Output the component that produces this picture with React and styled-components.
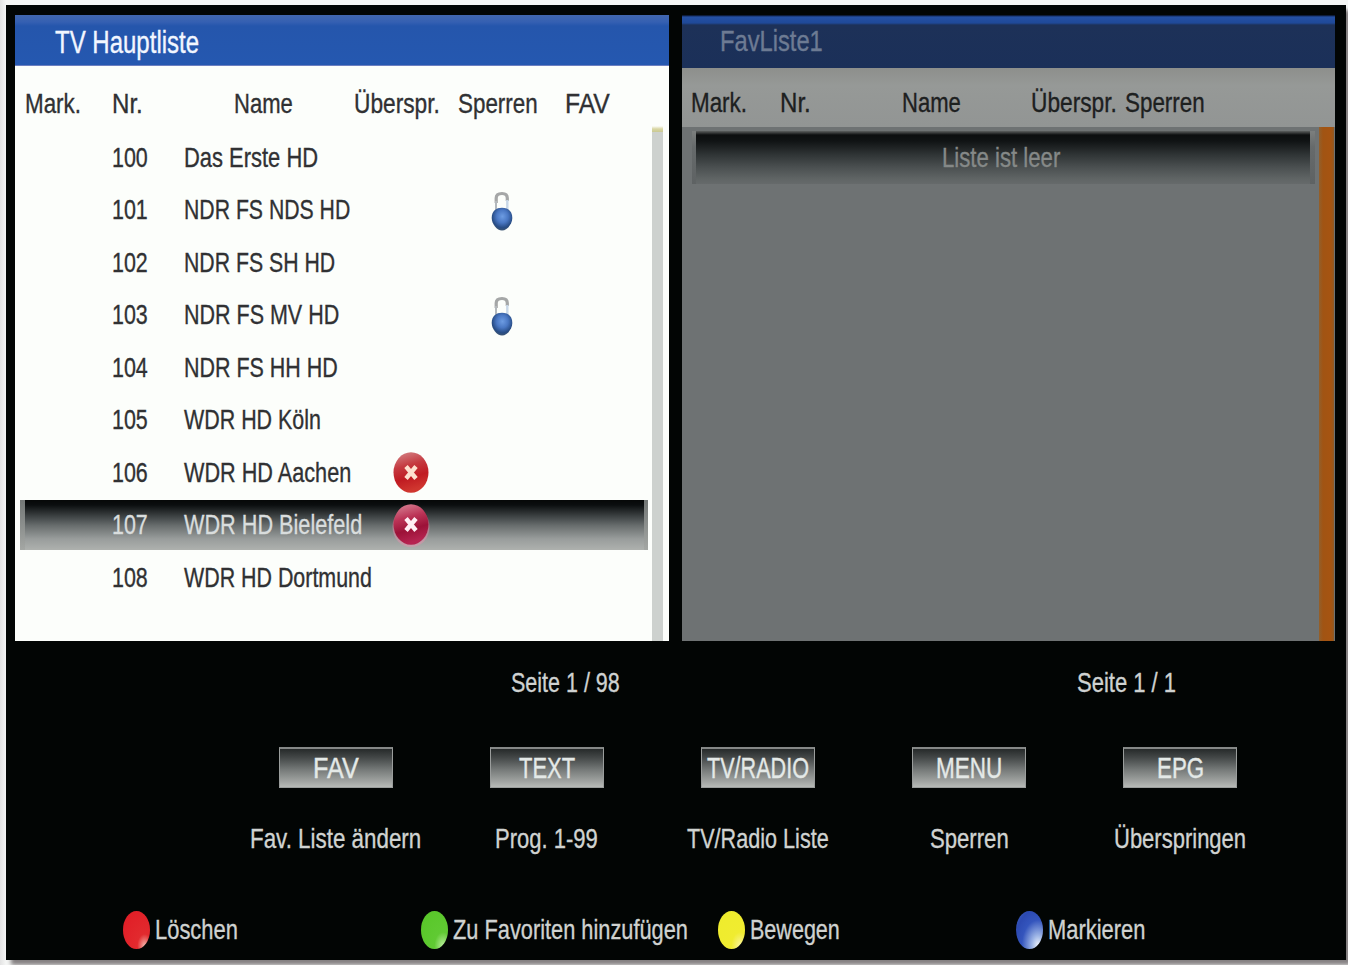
import React, { useLayoutEffect, useRef, useState } from "react";
import styled, { createGlobalStyle } from "styled-components";

const GlobalStyle = createGlobalStyle`
  *, *::before, *::after { box-sizing: border-box; }
  body {
    margin: 0;
    background: #f5f6f5;
    font-family: "Liberation Sans", Arial, sans-serif;
    overflow: hidden;
  }
`;

const Page = styled.div`
  width: 1348px;
  height: 965px;
  padding: 5px 2px 5px 6px;
  overflow: hidden;
  background: linear-gradient(90deg, #e3e3e3 0, #f5f6f5 6px);
`;

const Screen = styled.main`
  width: 1340px;
  height: 955px;
  padding: 10px 11px 0 9px;
  background: #020504;
  box-shadow: 5px 5px 4px #858182;
  display: flex;
  flex-direction: column;
`;

const Panels = styled.div`
  display: grid;
  grid-template-columns: 654px 653px;
  column-gap: 13px;
  height: 626px;
`;

const Panel = styled.section`
  display: flex;
  flex-direction: column;
  background: ${(p) => (p.$dim ? "#6e7273" : "#fcfefb")};
`;

const PanelTitle = styled.header`
  display: flex;
  align-items: center;
  height: ${(p) => (p.$dim ? 53 : 51)}px;
  padding: ${(p) => (p.$dim ? "0 0 1px 38px" : "5px 0 0 40px")};
  font-size: ${(p) => (p.$dim ? 29 : 31)}px;
  color: ${(p) => (p.$dim ? "#6d7b93" : "#f2f6ff")};
  background: ${(p) =>
    p.$dim
      ? "linear-gradient(#050b18 0, #2450a4 2px, #1f4998 8px, #1d3158 10px, #1b3059 100%)"
      : "linear-gradient(#4166ae 0, #3560b2 7px, #2556ac 11px, #2558b0 100%)"};
  border-bottom: ${(p) => (p.$dim ? "none" : "1px solid #6c7fc0")};
`;

const HeaderRow = styled.div`
  display: grid;
  grid-template-columns: ${(p) => p.$columns};
  align-items: center;
  height: ${(p) => (p.$dim ? 59 : 60)}px;
  padding: ${(p) => (p.$dim ? "11px 0 0 9px" : "15px 0 0 10px")};
  font-size: 28px;
  color: ${(p) => (p.$dim ? "#1d201f" : "#303133")};
  background: ${(p) => (p.$dim ? "linear-gradient(#8d8f8c, #969997 30%, #929594)" : "none")};
`;

const PanelBody = styled.div`
  display: flex;
  flex: 1;
  min-height: 0;
`;

const List = styled.div`
  flex: 1;
  display: flex;
  flex-direction: column;
  padding: ${(p) => p.$pad};
`;

const Row = styled.div`
  height: 52.5px;
  display: flex;
  align-items: center;
`;

const RowBar = styled.div`
  width: 628px;
  height: 50px;
  padding-left: 87px;
  display: grid;
  grid-template-columns: 72px 207px 91px 60px;
  align-items: center;
  font-size: 28px;
  color: ${(p) => (p.$selected ? "#d9dddd" : "#303133")};
  background: ${(p) =>
    p.$selected
      ? "linear-gradient(#060808 0, #0b0e0f 5px, #3c4142 16px, #6a6f6f 26px, #999d9c 39px, #aeb1ae 100%)"
      : "none"};
  border: solid transparent;
  border-width: 0 4px 0 5px;
  border-image: ${(p) =>
    p.$selected ? "linear-gradient(#737776, #a4a7a4) 0 4 0 5" : "none"};
`;

const IconCell = styled.span`
  grid-column: ${(p) => p.$col};
  display: flex;
  align-items: center;
  justify-content: center;
  width: 40px;
  height: 46px;
`;

const EmptyBar = styled.div`
  width: 623px;
  height: 53px;
  padding-right: 5px;
  display: flex;
  justify-content: center;
  align-items: center;
  font-size: 28px;
  color: #858988;
  background: linear-gradient(#5d605f 0, #0c0e0f 4px, #101314 10px, #303536 24px, #4a4f50 36px, #606565 48px, #666a6b 100%);
  border: solid transparent;
  border-width: 0 5px 0 4px;
  border-image: linear-gradient(#7c7f7e, #666a6b 30%, #5e6263) 0 5 0 4;
`;

const ScrollTrack = styled.div`
  width: ${(p) => (p.$dim ? 15 : 11)}px;
  margin: ${(p) => (p.$dim ? "0 1px 0 0" : "0 6px 0 0")};
  display: flex;
  flex-direction: column;
  background: ${(p) =>
    p.$dim
      ? "linear-gradient(90deg, #92602c 0, #a15413 4px, #a65411 12px, #8f5a24 15px)"
      : "#cdd1ce"};
`;

const ScrollCap = styled.span`
  height: 6px;
  background: linear-gradient(#fcfefb, #d9d6a2 50%, #c9c993);
`;

const PageCounts = styled.div`
  display: grid;
  grid-template-columns: 566px 1fr;
  height: 84px;
  padding-left: 496px;
  align-items: center;
  font-size: 28px;
  color: #cfd2d1;
`;

const Actions = styled.div`
  display: grid;
  grid-template-columns: repeat(5, 211.2px);
  padding: 22px 0 0 215px;
`;

const Action = styled.div`
  display: flex;
  flex-direction: column;
  align-items: center;
  gap: 33px;
  font-size: 28px;
  color: #d0d3d1;
`;

const KeyButton = styled.button`
  width: 114px;
  height: 41px;
  padding: 0;
  display: flex;
  align-items: center;
  justify-content: center;
  font: inherit;
  font-size: 29px;
  color: #e4e9e7;
  border: 1px solid #9a9d9c;
  border-top: 2px solid #858887;
  background: linear-gradient(#262a2a 0, #454949 9px, #777b7a 21px, #a3a6a4 33px, #b7bab7 100%);
`;

const ColorKeys = styled.footer`
  display: grid;
  grid-template-columns: repeat(4, 297.7px);
  padding: 53px 0 0 108px;
`;

const ColorKey = styled.div`
  display: flex;
  align-items: center;
  gap: 5px;
  height: 40px;
  font-size: 28px;
  color: #cfd2d0;
`;

const Dot = styled.span`
  width: 27px;
  height: 38px;
  border-radius: 50%;
  background: ${(p) => p.$fill};
`;

const TextBox = styled.span`
  display: block;
  width: ${(p) => p.$width}px;
  line-height: 36px;
  height: 36px;
  white-space: nowrap;
`;

const Glyphs = styled.span`
  display: inline-block;
  transform-origin: 0 50%;
  -webkit-text-stroke: 0.35px currentColor;
`;

/* Condenses a line of text so that it fills the given width. */
function Condensed({ width, children }) {
  const ref = useRef(null);
  const [scale, setScale] = useState(1);
  useLayoutEffect(() => {
    setScale(width / ref.current.offsetWidth);
  }, [width, children]);
  return (
    <TextBox $width={width}>
      <Glyphs ref={ref} style={{ transform: `scaleX(${scale})` }}>
        {children}
      </Glyphs>
    </TextBox>
  );
}

function SkipIcon({ selected }) {
  const id = selected ? "skipSelected" : "skip";
  return (
    <svg width="38" height="44" viewBox="0 0 38 44">
      <defs>
        <linearGradient id={id} x1="0" y1="0" x2="0.25" y2="1">
          <stop offset="0" stopColor={selected ? "#d98a9a" : "#d58a8c"} />
          <stop offset="0.4" stopColor={selected ? "#bc3457" : "#c53a40"} />
          <stop offset="0.7" stopColor={selected ? "#9c1238" : "#c01b22"} />
          <stop offset="1" stopColor={selected ? "#b52350" : "#d0362f"} />
        </linearGradient>
      </defs>
      {selected && <ellipse cx="19" cy="24" rx="18.5" ry="20" fill="#ee8fae" opacity="0.45" />}
      <ellipse cx="19" cy="21.5" rx="17.5" ry="20.3" fill={`url(#${id})`} />
      <path
        d="M14 15.5 L24 27.5 M24 15.5 L14 27.5"
        stroke={selected ? "#ffeef4" : "#fde0cf"}
        strokeWidth="4.4"
        fill="none"
      />
    </svg>
  );
}

function LockIcon() {
  return (
    <svg width="24" height="42" viewBox="0 0 24 42">
      <defs>
        <radialGradient id="lockBody" cx="0.52" cy="0.38" r="0.62">
          <stop offset="0" stopColor="#6d9ce2" />
          <stop offset="0.45" stopColor="#4a78c4" />
          <stop offset="0.8" stopColor="#284d86" />
          <stop offset="1" stopColor="#3b5472" />
        </radialGradient>
      </defs>
      <path d="M6.2 14 V9 Q6.2 4.5 12 4.5 Q17.3 4.5 17.3 9 V12" stroke="#a5a7a7" strokeWidth="3.2" fill="none" />
      <path d="M17.3 11 V21" stroke="#c9d8e8" strokeWidth="2.4" fill="none" />
      <path d="M6 12 V21" stroke="#b3b8bc" strokeWidth="2" fill="none" />
      <path d="M12 18.8 C18 18.8 22.3 22 22.3 29 C22.3 35 17 41.5 12 41.5 C7 41.5 1.7 35 1.7 29 C1.7 22 6 18.8 12 18.8 Z" fill="url(#lockBody)" />
    </svg>
  );
}

const mainColumns = [
  ["Mark.", 56],
  ["Nr.", 31],
  ["Name", 59],
  ["Überspr.", 86],
  ["Sperren", 80],
  ["FAV", 45],
];

const favColumns = mainColumns.slice(0, 5);

const channels = [
  { nr: 100, name: "Das Erste HD", width: 134 },
  { nr: 101, name: "NDR FS NDS HD", width: 166, locked: true },
  { nr: 102, name: "NDR FS SH HD", width: 151 },
  { nr: 103, name: "NDR FS MV HD", width: 155, locked: true },
  { nr: 104, name: "NDR FS HH HD", width: 154 },
  { nr: 105, name: "WDR HD Köln", width: 137 },
  { nr: 106, name: "WDR HD Aachen", width: 167, skipped: true },
  { nr: 107, name: "WDR HD Bielefeld", width: 178, skipped: true, selected: true },
  { nr: 108, name: "WDR HD Dortmund", width: 188 },
];

const actions = [
  { key: "FAV", keyWidth: 46, label: "Fav. Liste ändern", width: 171 },
  { key: "TEXT", keyWidth: 56, label: "Prog. 1-99", width: 103 },
  { key: "TV/RADIO", keyWidth: 102, label: "TV/Radio Liste", width: 142 },
  { key: "MENU", keyWidth: 66, label: "Sperren", width: 79 },
  { key: "EPG", keyWidth: 47, label: "Überspringen", width: 132 },
];

const colorKeys = [
  { label: "Löschen", width: 83, fill: "radial-gradient(ellipse at 80% 92%, #f3b5ab 0, #e22a2e 24%, #e01b25 100%)" },
  { label: "Zu Favoriten hinzufügen", width: 235, fill: "radial-gradient(ellipse at 82% 92%, #b9ee9c 0, #60ca33 28%, #57c627 100%)" },
  { label: "Bewegen", width: 90, fill: "radial-gradient(ellipse at 82% 92%, #fbf59a 0, #f0ec30 28%, #eeec2c 100%)" },
  { label: "Markieren", width: 97, fill: "radial-gradient(ellipse at 82% 90%, #eef3fb 0, #9db5e6 20%, #3455bd 52%, #2c4ab2 75%, #4566bd 100%)" },
];

export default function App() {
  return (
    <>
      <GlobalStyle />
      <Page>
        <Screen>
          <Panels>
            <Panel>
              <PanelTitle>
                <Condensed width={144}>TV Hauptliste</Condensed>
              </PanelTitle>
              <HeaderRow $columns="87px 122px 120px 104px 107px 1fr">
                {mainColumns.map(([text, width]) => (
                  <Condensed key={text} width={width}>{text}</Condensed>
                ))}
              </HeaderRow>
              <PanelBody>
                <List $pad="5.5px 0 0 5px">
                  {channels.map((c) => (
                    <Row key={c.nr}>
                      <RowBar $selected={c.selected}>
                        <Condensed width={36}>{c.nr}</Condensed>
                        <Condensed width={c.width}>{c.name}</Condensed>
                        {c.skipped && (
                          <IconCell $col={3}>
                            <SkipIcon selected={c.selected} />
                          </IconCell>
                        )}
                        {c.locked && (
                          <IconCell $col={4}>
                            <LockIcon />
                          </IconCell>
                        )}
                      </RowBar>
                    </Row>
                  ))}
                </List>
                <ScrollTrack>
                  <ScrollCap />
                </ScrollTrack>
              </PanelBody>
            </Panel>
            <Panel $dim>
              <PanelTitle $dim>
                <Condensed width={103}>FavListe1</Condensed>
              </PanelTitle>
              <HeaderRow $dim $columns="89px 122px 129px 94px 1fr">
                {favColumns.map(([text, width]) => (
                  <Condensed key={text} width={width}>{text}</Condensed>
                ))}
              </HeaderRow>
              <PanelBody>
                <List $pad="4px 0 0 10px">
                  <EmptyBar>
                    <Condensed width={118}>Liste ist leer</Condensed>
                  </EmptyBar>
                </List>
                <ScrollTrack $dim />
              </PanelBody>
            </Panel>
          </Panels>
          <PageCounts>
            <Condensed width={109}>Seite 1 / 98</Condensed>
            <Condensed width={99}>Seite 1 / 1</Condensed>
          </PageCounts>
          <Actions>
            {actions.map((a) => (
              <Action key={a.key}>
                <KeyButton>
                  <Condensed width={a.keyWidth}>{a.key}</Condensed>
                </KeyButton>
                <Condensed width={a.width}>{a.label}</Condensed>
              </Action>
            ))}
          </Actions>
          <ColorKeys>
            {colorKeys.map((k) => (
              <ColorKey key={k.label}>
                <Dot $fill={k.fill} />
                <Condensed width={k.width}>{k.label}</Condensed>
              </ColorKey>
            ))}
          </ColorKeys>
        </Screen>
      </Page>
    </>
  );
}
